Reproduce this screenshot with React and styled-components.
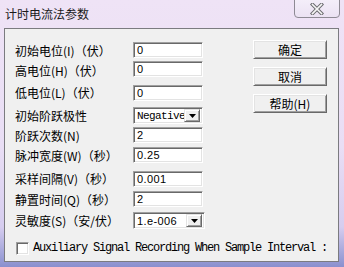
import React from 'react';
import styled, { createGlobalStyle } from 'styled-components';

const GlobalStyle = createGlobalStyle`
  html, body {
    margin: 0;
    padding: 0;
    background: #fff;
  }
`;

const Frame = styled.div`
  width: 344px;
  height: 267px;
  box-sizing: border-box;
  padding: 0 5px 5px 4px;
  display: flex;
  flex-direction: column;
  background: linear-gradient(to bottom, #efe3f6 0%, #e9def5 55%, #d6cdef 85%, #9ea1d8 96%, #8a8fce 100%);
  font-family: "Noto Sans CJK SC", "Noto Sans", sans-serif;
  color: #000;
`;

const TitleBar = styled.div`
  height: 28px;
  display: flex;
  justify-content: space-between;
  align-items: flex-start;
`;

const Title = styled.div`
  padding: 6px 0 0 1px;
  font-size: 12px;
  line-height: 16px;
  color: #1a1a1a;
`;

const CloseButton = styled.div`
  width: 46px;
  height: 19px;
  margin: -1px -1px 0 0;
  box-sizing: border-box;
  border: 1px solid #8e8a94;
  border-radius: 0 0 4px 4px;
  background: linear-gradient(to bottom, #f4eef9, #ebe2f3);
  display: flex;
  align-items: center;
  justify-content: center;
`;

const Client = styled.div`
  flex: 1;
  box-sizing: border-box;
  border: 1px solid #7b7b80;
  background: #f0f0f0;
  display: flex;
  flex-direction: column;
`;

const Top = styled.div`
  display: flex;
`;

const Form = styled.div`
  padding: 12px 0 0 10px;
  width: 188px;
  display: flex;
  flex-direction: column;
`;

const Row = styled.div`
  display: grid;
  grid-template-columns: 118px auto;
  align-items: center;
  margin-top: ${p => p.$mt || 0}px;
`;

const Label = styled.div`
  font-size: 12px;
  line-height: 14px;
  padding-top: ${p => p.$dy || 0}px;
  white-space: nowrap;
`;

const sunken = `
  box-sizing: border-box;
  border-top: 1px solid #a0a0a0;
  border-left: 1px solid #a0a0a0;
  border-bottom: 1px solid #ffffff;
  border-right: 1px solid #ffffff;
  box-shadow: inset 1px 1px 0 #696969, inset -1px -1px 0 #e3e3e3;
  background: #fff;
`;

const Field = styled.input`
  ${sunken}
  width: 70px;
  height: 16px;
  margin: 0;
  padding: 0 0 0 3px;
  outline: none;
  font-family: "Liberation Sans", Arial, sans-serif;
  font-size: 11px;
  letter-spacing: 0.4px;
  color: #000;
`;

const Combo = styled.div`
  ${sunken}
  width: ${p => p.$w || 70}px;
  height: 17px;
  display: flex;
  align-items: center;
  padding: 2px 2px 2px 3px;
`;

const ComboText = styled.span`
  flex: 1;
  font-family: ${p => (p.$serif ? '"Liberation Mono", monospace' : '"Liberation Sans", Arial, sans-serif')};
  font-size: 11px;
  letter-spacing: ${p => (p.$serif ? -0.6 : 0.4)}px;
  white-space: nowrap;
  overflow: hidden;
`;

const DropButton = styled.div`
  width: 16px;
  height: 13px;
  box-sizing: border-box;
  background: #f0f0f0;
  border-top: 1px solid #e3e3e3;
  border-left: 1px solid #e3e3e3;
  border-bottom: 1px solid #696969;
  border-right: 1px solid #696969;
  box-shadow: inset 1px 1px 0 #fff, inset -1px -1px 0 #a0a0a0;
  display: flex;
  align-items: center;
  justify-content: center;
`;

const Buttons = styled.div`
  margin: 11px 0 0 50px;
  display: flex;
  flex-direction: column;
  gap: 8px;
`;

const Button = styled.button`
  width: 74px;
  height: 19px;
  margin: 0;
  padding: 0;
  box-sizing: border-box;
  background: #f0f0f0;
  border-top: 1px solid #ffffff;
  border-left: 1px solid #ffffff;
  border-bottom: 1px solid #696969;
  border-right: 1px solid #696969;
  box-shadow: inset 1px 1px 0 #e3e3e3, inset -1px -1px 0 #a0a0a0;
  font-family: "Noto Sans CJK SC", "Noto Sans", sans-serif;
  font-size: 12px;
  line-height: 15px;
  color: #000;
`;

const CheckRow = styled.div`
  margin: 12px 0 0 11px;
  display: flex;
  align-items: center;
  gap: 4px;
  width: 311px;
  overflow: hidden;
`;

const CheckBox = styled.div`
  ${sunken}
  flex: none;
  width: 13px;
  height: 13px;
`;

const CheckText = styled.span`
  font-family: "Liberation Mono", monospace;
  font-size: 12px;
  letter-spacing: -1.2px;
  white-space: nowrap;
`;

const Arrow = () => (
  <svg width="7" height="4" viewBox="0 0 7 4">
    <path d="M0 0h7L3.5 4z" fill="#000" />
  </svg>
);

const fields = [
  { label: '初始电位(I)（伏）', value: '0', mt: 0, dy: 3 },
  { label: '高电位(H)（伏）', value: '0', mt: 2, dy: 4 },
  { label: '低电位(L)（伏）', value: '0', mt: 7, dy: 0 },
  { label: '初始阶跃极性', combo: 'Negative', serif: true, mt: 6, dy: 0 },
  { label: '阶跃次数(N)', value: '2', mt: 3, dy: 1 },
  { label: '脉冲宽度(W)（秒）', value: '0.25', mt: 3, dy: 3 },
  { label: '采样间隔(V)（秒）', value: '0.001', mt: 8, dy: 0 },
  { label: '静置时间(Q)（秒）', value: '2', mt: 4, dy: 2 },
  { label: '灵敏度(S)（安/伏）', combo: '1.e-006', mt: 5, dy: 0, w: 72 },
];

const App = () => {
  return (
    <>
      <GlobalStyle />
      <Frame>
        <TitleBar>
          <Title>计时电流法参数</Title>
          <CloseButton>
            <svg width="14" height="12" viewBox="0 0 14 12">
              <path d="M2.5 1.5L11.5 10.5M11.5 1.5L2.5 10.5" stroke="#6c6c70" strokeWidth="3.6" strokeLinecap="square" />
              <path d="M2.5 1.5L11.5 10.5M11.5 1.5L2.5 10.5" stroke="#f7f7f7" strokeWidth="1.6" strokeLinecap="square" />
            </svg>
          </CloseButton>
        </TitleBar>
        <Client>
          <Top>
            <Form>
              {fields.map(f => (
                <Row key={f.label} $mt={f.mt}>
                  <Label $dy={f.dy}>{f.label}</Label>
                  {f.combo ? (
                    <Combo $w={f.w}>
                      <ComboText $serif={f.serif}>{f.combo}</ComboText>
                      <DropButton><Arrow /></DropButton>
                    </Combo>
                  ) : (
                    <Field readOnly value={f.value} />
                  )}
                </Row>
              ))}
            </Form>
            <Buttons>
              <Button>确定</Button>
              <Button>取消</Button>
              <Button>帮助(H)</Button>
            </Buttons>
          </Top>
          <CheckRow>
            <CheckBox />
            <CheckText>Auxiliary Signal Recording When Sample Interval :</CheckText>
          </CheckRow>
        </Client>
      </Frame>
    </>
  );
};

export default App;
